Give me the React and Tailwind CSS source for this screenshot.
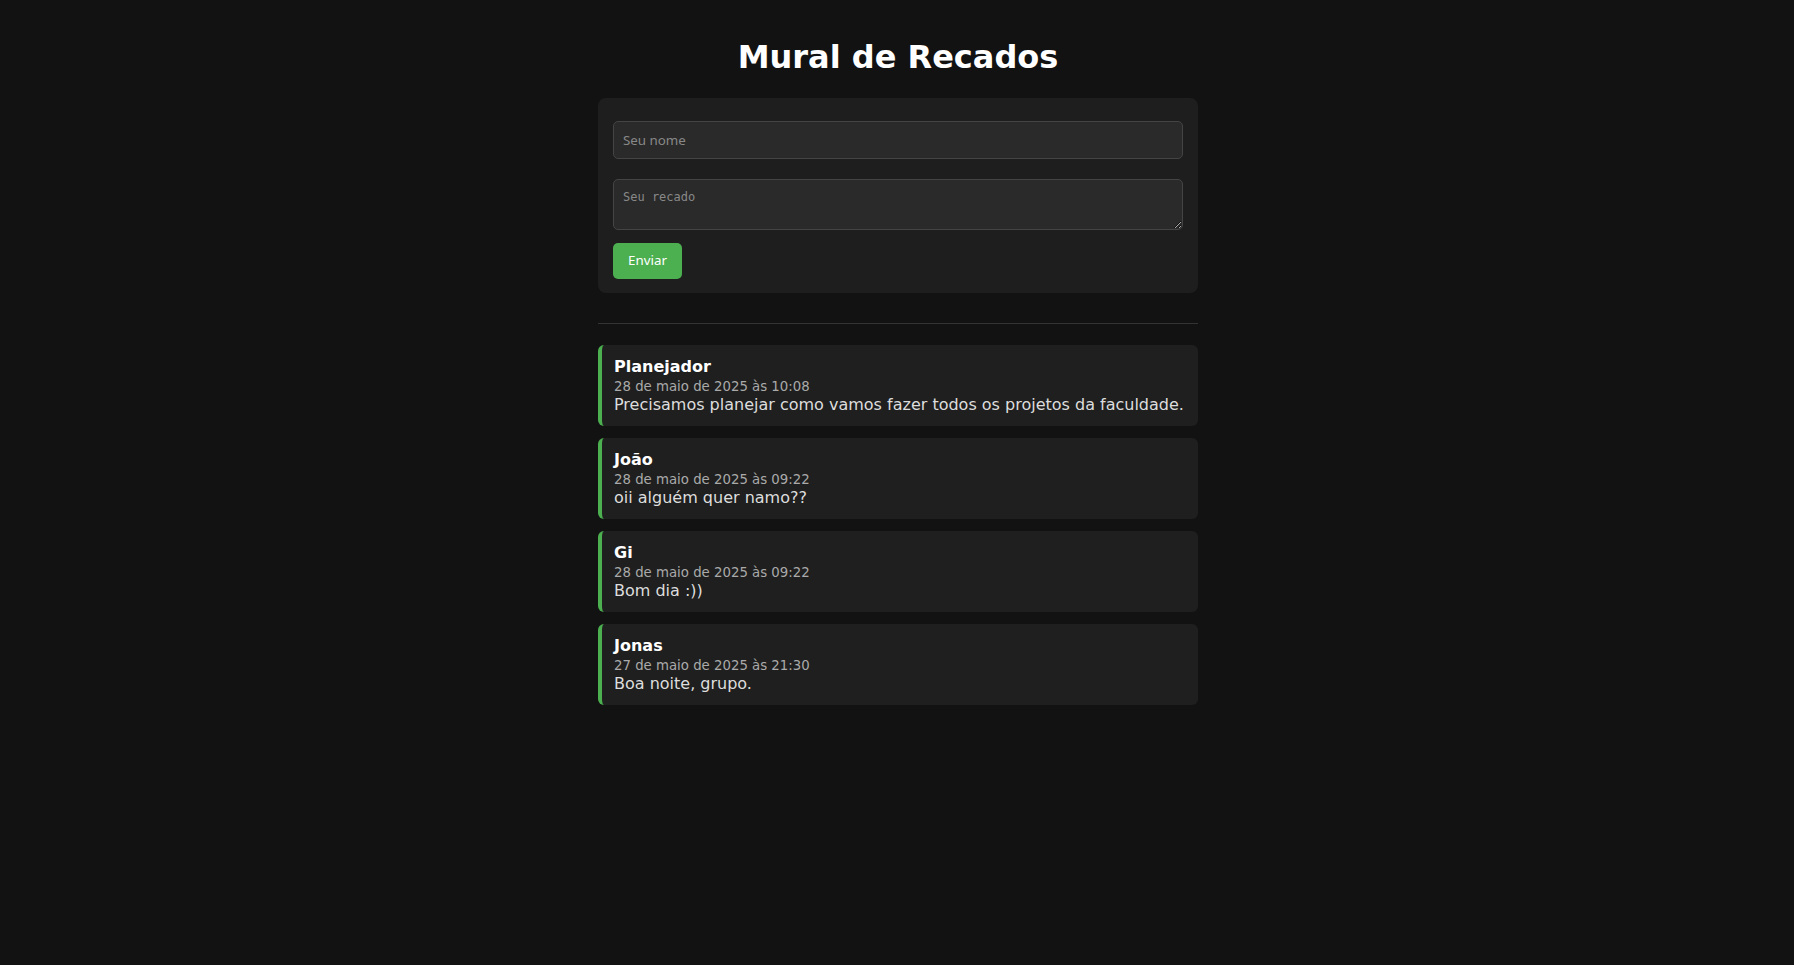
import React from "react";

const messages = [
  { name: "Planejador", date: "28 de maio de 2025 às 10:08", text: "Precisamos planejar como vamos fazer todos os projetos da faculdade." },
  { name: "João", date: "28 de maio de 2025 às 09:22", text: "oii alguém quer namo??" },
  { name: "Gi", date: "28 de maio de 2025 às 09:22", text: "Bom dia :))" },
  { name: "Jonas", date: "27 de maio de 2025 às 21:30", text: "Boa noite, grupo." },
];

export default function App() {
  return (
    <div className="flex min-h-screen justify-center bg-[#121212] pl-[2px] font-['DejaVu_Sans',sans-serif] text-[#e0e0e0]">
      <div className="w-[600px] pt-[39px] pb-10">
        <h1 className="mb-[22px] text-center text-[32px] font-bold leading-[37px] text-white">
          Mural de Recados
        </h1>
        <div className="flex flex-col rounded-[8px] bg-[#1e1e1e] px-[15px] pt-[23px] pb-[14px]">
          <input
            type="text"
            placeholder="Seu nome"
            className="h-[38px] w-full rounded-[5px] border border-[#444] bg-[#2a2a2a] px-[9px] font-[system-ui] text-[13.33px] text-[#eee] outline-none placeholder:text-[#888]"
          />
          <textarea
            placeholder="Seu recado"
            className="mt-[20px] h-[51px] w-full rounded-[5px] border border-[#444] bg-[#2a2a2a] px-[9px] py-[10px] font-['DejaVu_Sans_Mono',monospace] text-[12px] leading-[14px] text-[#eee] outline-none placeholder:text-[#888]"
          />
          <button className="mt-[13px] h-[36px] w-[69px] rounded-[5px] bg-[#4caf50] font-[system-ui] text-[13.33px] text-white">
            Enviar
          </button>
        </div>
        <div className="mt-[30px] mb-[21px] h-px bg-[#333]" />
        <div className="flex flex-col gap-[12px]">
          {messages.map((m, i) => (
            <div key={i} className="rounded-[6px] border-l-4 border-[#4caf50] bg-[#1f1f1f] py-[12px] pl-[12px] pr-[12px]">
              <div className="text-[16px] font-bold leading-[19px] text-white">{m.name}</div>
              <div className="mt-[3px] text-[13.3px] leading-[16px] text-[#aaa]">{m.date}</div>
              <div className="text-[16px] leading-[19px] text-[#ddd]">{m.text}</div>
            </div>
          ))}
        </div>
      </div>
    </div>
  );
}
